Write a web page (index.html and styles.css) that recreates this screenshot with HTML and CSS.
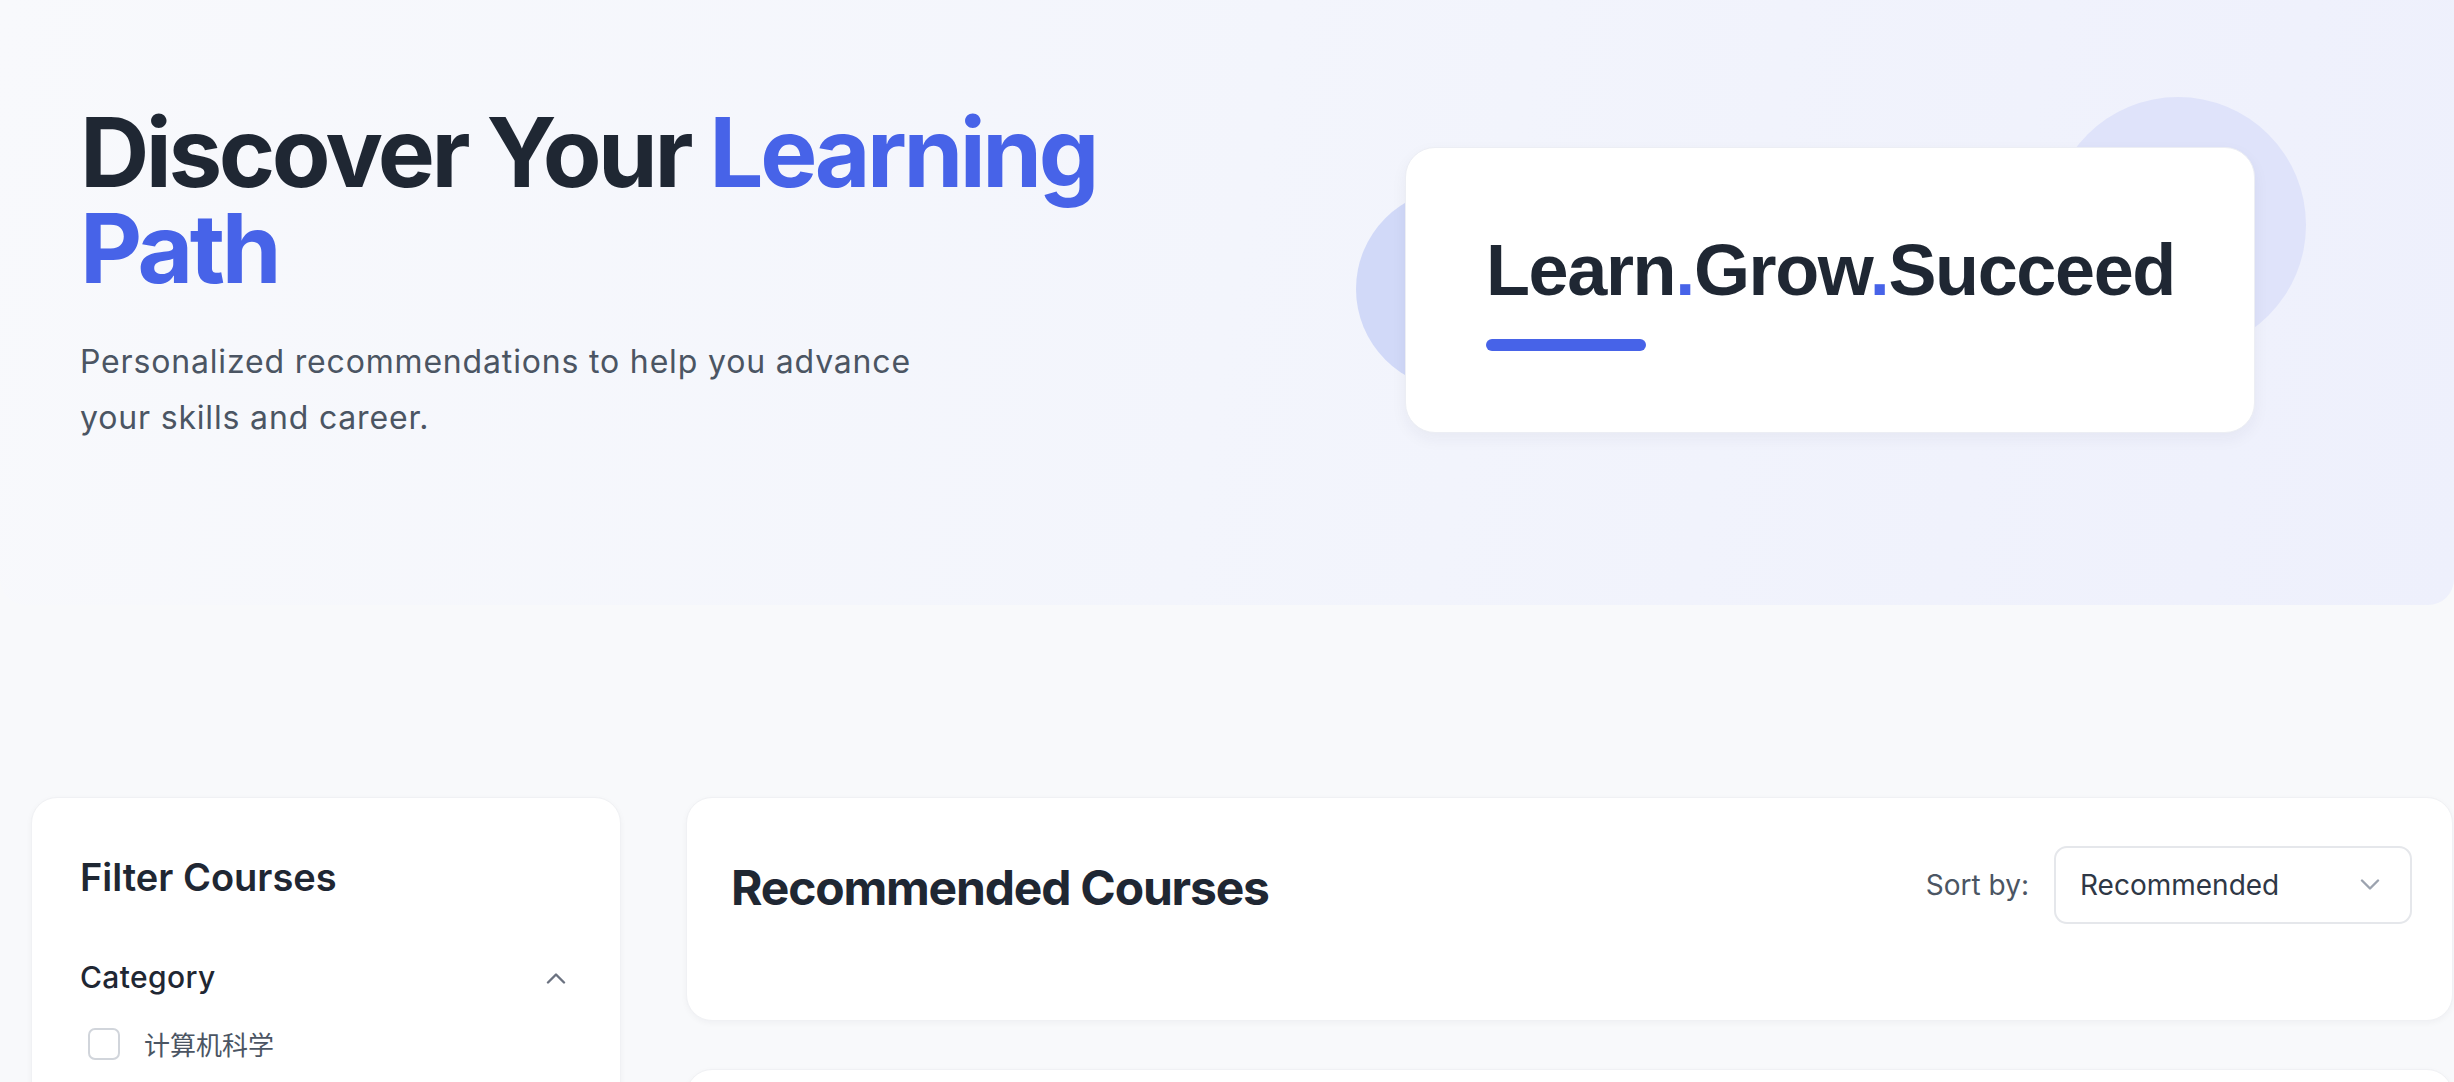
FILE: index.html
```html
<!DOCTYPE html>
<html lang="en">
<head>
<meta charset="utf-8">
<title>Discover Your Learning Path</title>
<link rel="stylesheet" href="styles.css">
</head>
<body>
  <header class="hero">
    <div class="hero-text">
      <h1 class="hero-title">Discover Your <span class="accent">Learning</span> <span class="accent">Path</span></h1>
      <p class="hero-sub">Personalized recommendations to help you advance your skills and career.</p>
    </div>
    <div class="hero-visual">
      <span class="blob blob-left"></span>
      <span class="blob blob-right"></span>
      <div class="motto-card">
        <div class="motto">Learn<span class="dot">.</span>Grow<span class="dot">.</span>Succeed</div>
        <div class="motto-bar"></div>
      </div>
    </div>
  </header>

  <main class="layout">
    <aside class="filters card">
      <h2 class="filters-title">Filter Courses</h2>
      <div class="filter-group">
        <div class="filter-head">
          <span class="filter-name">Category</span>
          <svg class="chev-up" width="20" height="12" viewBox="0 0 20 12" fill="none"><path d="M2 10.5 L10 2.5 L18 10.5" stroke="#6b7280" stroke-width="2.4" stroke-linecap="round" stroke-linejoin="round"/></svg>
        </div>
        <label class="option"><span class="box"></span><span class="option-text">计算机科学</span></label>
      </div>
    </aside>

    <section class="content">
      <div class="results-head card">
        <h2 class="results-title">Recommended Courses</h2>
        <div class="sort">
          <span class="sort-label">Sort by:</span>
          <div class="select">
            <span class="select-value">Recommended</span>
            <svg width="20" height="12" viewBox="0 0 20 12" fill="none"><path d="M2 1.5 L10 9.5 L18 1.5" stroke="#9ca3af" stroke-width="2.4" stroke-linecap="round" stroke-linejoin="round"/></svg>
          </div>
        </div>
      </div>
      <div class="course-card card"></div>
    </section>
  </main>
</body>
</html>
```

FILE: styles.css
```css
* { box-sizing: border-box; }

html, body {
  margin: 0;
  padding: 0;
}

body {
  background: #f8f9fb;
  font-family: Inter, "Noto Sans", "Noto Sans CJK SC", sans-serif;
  color: #1f2937;
  overflow: hidden;
  width: 2454px;
  height: 1082px;
}

/* HERO */
.hero {
  height: 605px;
  display: grid;
  grid-template-columns: 1fr 850px;
  padding: 0 199px 0 80px;
  background: linear-gradient(100deg, #f8f9fc 0%, #f3f5fc 50%, #eef0fc 100%);
  border-radius: 0 0 26px 26px;
}

.hero-text {
  padding-top: 104px;
}

.hero-title {
  margin: 0;
  max-width: 1100px;
  font-size: 96px;
  line-height: 1;
  font-weight: 700;
  letter-spacing: -0.036em;
  color: #1f2733;
}

.accent { color: #4763e8; }

.hero-sub {
  margin: 38px 0 0;
  max-width: 880px;
  font-size: 32px;
  line-height: 56px;
  letter-spacing: 0.026em;
  color: #4b5563;
}

.hero-visual {
  position: relative;
  margin-top: 147px;
  height: 286px;
}

.blob {
  position: absolute;
  border-radius: 50%;
}

.blob-left {
  width: 200px;
  height: 200px;
  left: -49px;
  top: 42px;
  background: #d1d9f8;
}

.blob-right {
  width: 256px;
  height: 256px;
  left: 645px;
  top: -50px;
  background: #dfe3fa;
}

.motto-card {
  position: relative;
  height: 286px;
  background: #fff;
  border: 1px solid #eceef4;
  border-radius: 30px;
  box-shadow: 0 6px 16px rgba(30, 41, 80, 0.05);
  padding: 79px 80px;
}

.motto {
  font-family: "Liberation Sans", Arial, sans-serif;
  font-weight: 700;
  font-size: 72px;
  line-height: 1.2;
  letter-spacing: -0.019em;
  color: #1f2733;
}

.dot { color: #4763e8; }

.motto-bar {
  margin-top: 26px;
  width: 160px;
  height: 12px;
  border-radius: 6px;
  background: #4763e8;
}

/* LOWER */
.layout {
  display: grid;
  grid-template-columns: 590px 1fr;
  column-gap: 65px;
  padding: 192px 1px 0 31px;
  align-items: start;
}

.card {
  background: #fff;
  border: 1px solid #f0f1f4;
  border-radius: 26px;
  box-shadow: 0 2px 6px rgba(17, 24, 39, 0.04);
}

.filters {
  padding: 51px 48px 40px;
  height: 500px;
}

.filters-title {
  margin: 0;
  font-size: 38px;
  line-height: 1.5;
  font-weight: 600;
  color: #1f2733;
}

.filter-group {
  margin-top: 49px;
}

.filter-head {
  display: flex;
  align-items: center;
  justify-content: space-between;
  padding-right: 6px;
}

.filter-name {
  font-size: 30px;
  line-height: 1.5;
  font-weight: 500;
  letter-spacing: 0.012em;
  color: #1f2733;
}

.option {
  display: flex;
  align-items: center;
  gap: 24px;
  margin-top: 24px;
  padding-left: 8px;
}

.box {
  width: 32px;
  height: 32px;
  border: 2px solid #d1d5db;
  border-radius: 7px;
  background: #fff;
}

.option-text {
  font-family: "Noto Sans CJK SC", sans-serif;
  font-size: 26px;
  line-height: 39px;
  color: #4b5563;
}

.content {
  display: flex;
  flex-direction: column;
  gap: 48px;
}

.results-head {
  display: flex;
  align-items: center;
  justify-content: space-between;
  padding: 48px 40px 96px 44px;
}

.results-title {
  margin: 6px 0 0;
  font-size: 48px;
  line-height: 1;
  font-weight: 700;
  letter-spacing: -0.025em;
  color: #1f2733;
}

.sort {
  display: flex;
  align-items: center;
  gap: 25px;
}

.sort-label {
  font-size: 28px;
  color: #4b5563;
}

.select {
  width: 358px;
  height: 78px;
  border: 2px solid #e5e7eb;
  border-radius: 13px;
  display: flex;
  align-items: center;
  justify-content: space-between;
  padding: 0 30px 0 24px;
  background: #fff;
}

.select-value {
  font-size: 28px;
  color: #2f3846;
}

.course-card {
  height: 300px;
}
```
